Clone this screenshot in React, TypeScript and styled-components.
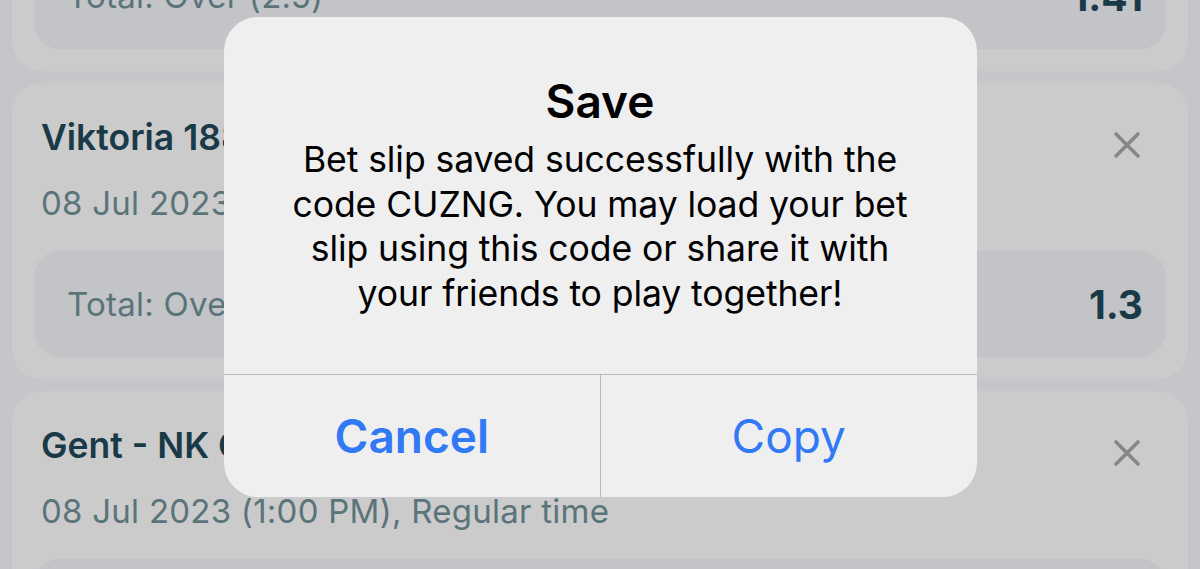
import React from "react";
import styled, { createGlobalStyle } from "styled-components";

const GlobalStyle = createGlobalStyle`
  html, body {
    margin: 0;
    padding: 0;
    background: #c5c6ca;
  }
  body {
    font-family: Inter, "Noto Sans", sans-serif;
    -webkit-font-smoothing: antialiased;
  }
`;

const Screen = styled.div`
  position: relative;
  width: 1200px;
  height: 569px;
  overflow: hidden;
  background: #c5c6ca;
`;

/* scrolled list of picks on the bet slip */
const SlipList = styled.div`
  display: flex;
  flex-direction: column;
  gap: 12px;
  padding: 0 12px;
  margin-top: -225px;
`;

const Card = styled.section`
  display: flex;
  flex-direction: column;
  background: #cbcbcc;
  border-radius: 30px;
  padding: 22px;
`;

const Header = styled.div`
  display: flex;
  align-items: flex-start;
  justify-content: space-between;
  padding: 13px 7px 0;
`;

const Info = styled.div`
  display: flex;
  flex-direction: column;
`;

const Title = styled.div`
  font-size: 35.5px;
  font-weight: 600;
  line-height: 40px;
  color: #1a3a47;
  letter-spacing: 0;
`;

const Meta = styled.div`
  margin-top: 25px;
  font-size: 33px;
  line-height: 40px;
  color: #5a7479;
  letter-spacing: 0.25px;
`;

const CloseButton = styled.button`
  margin: 13px 18px 0 0;
  width: 28px;
  height: 28px;
  padding: 0;
  border: 0;
  background: none;
  display: flex;
  align-items: center;
  justify-content: center;
`;

const Market = styled.div`
  margin-top: 28px;
  height: 106px;
  border-radius: 26px;
  background: #c3c4c7;
  display: flex;
  align-items: center;
  justify-content: space-between;
  padding: 0 23px 0 33px;
`;

const MarketName = styled.span`
  font-size: 33px;
  color: #5a7479;
  letter-spacing: 0.25px;
`;

const Odds = styled.span`
  font-size: 39px;
  font-weight: 700;
  color: #1a3a47;
`;

/* alert */
const Overlay = styled.div`
  position: absolute;
  inset: 0;
  display: flex;
  justify-content: center;
  align-items: flex-start;
  padding-top: 17px;
`;

const Alert = styled.div`
  width: 753px;
  height: 480px;
  background: #efefef;
  border-radius: 34px;
  display: flex;
  flex-direction: column;
  overflow: hidden;
`;

const AlertBody = styled.div`
  flex: 1;
  display: flex;
  flex-direction: column;
  align-items: center;
  padding: 56px 30px 0;
  text-align: center;
`;

const AlertTitle = styled.h2`
  margin: 0;
  font-size: 46px;
  line-height: 56px;
  font-weight: 600;
  color: #000;
`;

const AlertMessage = styled.p`
  margin: 9px 0 0;
  font-size: 35.6px;
  line-height: 44.5px;
  color: #000;
  letter-spacing: -0.1px;
`;

const Actions = styled.div`
  height: 122px;
  display: grid;
  grid-template-columns: 1fr 1fr;
  border-top: 1px solid #b9b9bb;
`;

const ActionButton = styled.button<{ $primary?: boolean }>`
  border: 0;
  background: none;
  font-family: inherit;
  font-size: 46px;
  font-weight: ${(p) => (p.$primary ? 600 : 400)};
  color: #3179f5;
  padding: 0;
  & + & {
    border-left: 1px solid #b9b9bb;
  }
`;

const CloseIcon = () => (
  <svg width="28" height="28" viewBox="0 0 28 28">
    <path
      d="M3 3 L25 25 M25 3 L3 25"
      stroke="#878787"
      strokeWidth="3.6"
      strokeLinecap="round"
    />
  </svg>
);

type Pick = { title: string; date: string; market: string; odds: string };

const picks: Pick[] = [
  {
    title: "Wolfsberger AC - Sturm Graz",
    date: "08 Jul 2023 (11:00 AM), Regular time",
    market: "Total: Over (2.5)",
    odds: "1.41",
  },
  {
    title: "Viktoria 1889 - Hertha",
    date: "08 Jul 2023 (12:00 PM), Regular time",
    market: "Total: Over (2.5)",
    odds: "1.3",
  },
  {
    title: "Gent - NK Celje",
    date: "08 Jul 2023 (1:00 PM), Regular time",
    market: "Total: Over (2.5)",
    odds: "1.45",
  },
];

export default function App() {
  return (
    <>
      <GlobalStyle />
      <Screen>
        <SlipList>
          {picks.map((p) => (
            <Card key={p.title}>
              <Header>
                <Info>
                  <Title>{p.title}</Title>
                  <Meta>{p.date}</Meta>
                </Info>
                <CloseButton aria-label="Remove">
                  <CloseIcon />
                </CloseButton>
              </Header>
              <Market>
                <MarketName>{p.market}</MarketName>
                <Odds>{p.odds}</Odds>
              </Market>
            </Card>
          ))}
        </SlipList>
        <Overlay>
          <Alert role="alertdialog">
            <AlertBody>
              <AlertTitle>Save</AlertTitle>
              <AlertMessage>
                Bet slip saved successfully with the
                <br />
                code CUZNG. You may load your bet
                <br />
                slip using this code or share it with
                <br />
                your friends to play together!
              </AlertMessage>
            </AlertBody>
            <Actions>
              <ActionButton $primary>Cancel</ActionButton>
              <ActionButton>Copy</ActionButton>
            </Actions>
          </Alert>
        </Overlay>
      </Screen>
    </>
  );
}
